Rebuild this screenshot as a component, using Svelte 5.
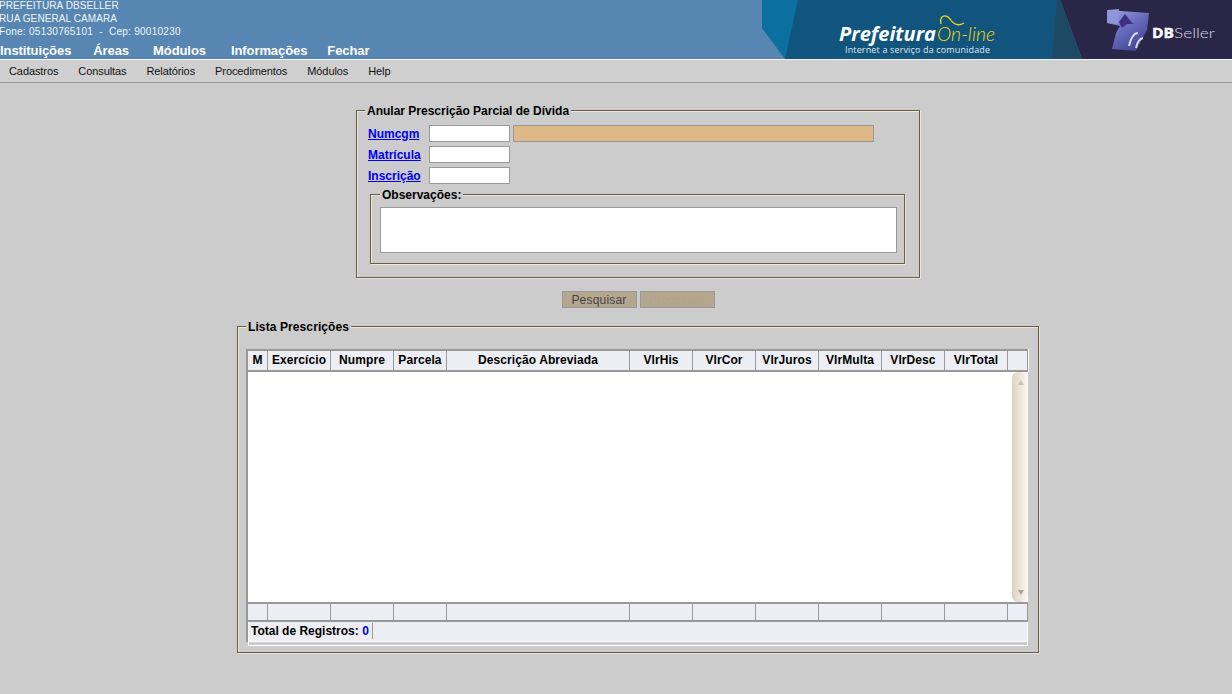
<script lang="ts">
	const mainMenu = ['Instituições', 'Áreas', 'Módulos', 'Informações', 'Fechar'];
	const subMenu = ['Cadastros', 'Consultas', 'Relatórios', 'Procedimentos', 'Módulos', 'Help'];
	const fields = ['Numcgm', 'Matrícula', 'Inscrição'];
	const columns = ['M', 'Exercício', 'Numpre', 'Parcela', 'Descrição Abreviada', 'VlrHis', 'VlrCor', 'VlrJuros', 'VlrMulta', 'VlrDesc', 'VlrTotal', ''];
</script>

<header class="topo">
	<div class="info">
		<div class="dados">
			<div>PREFEITURA DBSELLER</div>
			<div>RUA GENERAL CAMARA</div>
			<div class="fone">Fone: 05130765101 &nbsp;-&nbsp; Cep: 90010230</div>
		</div>
		<nav class="menu-principal">
			{#each mainMenu as item}
				<span>{item}</span>
			{/each}
		</nav>
	</div>
	<svg class="banner" width="470" height="59" viewBox="762 0 470 59" aria-label="Prefeitura On-line, DBSeller">
		<defs>
			<linearGradient id="cubo" x1="0" y1="0" x2="0.7" y2="1">
				<stop offset="0" stop-color="#a3a8e2" />
				<stop offset="0.5" stop-color="#6a6cc0" />
				<stop offset="1" stop-color="#43438f" />
			</linearGradient>
		</defs>
		<polygon points="1060,0 1232,0 1232,59 1082,59" fill="#2a2647" />
		<polygon points="762,0 800,0 786,59 785,59 762,28" fill="#0b6fa0" />
		<polygon points="798,0 1060,0 1082,59 785,59" fill="#11557f" />
		<polygon points="1057,0 1060,0 1082,59 1052,59" fill="#1d4965" />
		<text x="839" y="41" class="pref" textLength="97" lengthAdjust="spacingAndGlyphs">Prefeitura</text>
		<text x="937" y="41" class="online" textLength="58" lengthAdjust="spacingAndGlyphs">On-line</text>
		<path d="M941 24 C 939 15, 946 14, 950 19 C 954 25, 959 26, 964 23" fill="none" stroke="#f2d90c" stroke-width="1.3" />
		<text x="845" y="53" class="slogan" textLength="145">Internet a serviço da comunidade</text>
		<polygon points="1107,10 1149,13 1147,30 1136,51 1112,49 1116,33 1120,26 1107,23" fill="url(#cubo)" />
		<polygon points="1107,10 1119,9 1118,24 1107,23" fill="#8f95d8" />
		<polygon points="1119,22 1125,14 1133,24 1127,24 1122,28" fill="#3c2f7c" />
		<path d="M1129 46 Q1132 33 1138 33 M1136 48 Q1138 39 1143 38" fill="none" stroke="#d9dcf4" stroke-width="2" />
		<text x="1152" y="38" class="db" textLength="22" lengthAdjust="spacingAndGlyphs">DB</text>
		<text x="1174" y="38" class="seller" textLength="41" lengthAdjust="spacingAndGlyphs">Seller</text>
	</svg>
</header>

<nav class="menu-sec">
	{#each subMenu as item}
		<span>{item}</span>
	{/each}
</nav>

<main class="conteudo">
	<form class="form-anular">
		<fieldset class="caixa principal">
			<legend>Anular Prescrição Parcial de Dívida</legend>
			<div class="campos">
				{#each fields as field, i}
					<a href="#{field}" class="rotulo">{field}</a>
					<div class="linha">
						<input type="text" class="codigo" />
						{#if i === 0}<input type="text" class="nome" readonly />{/if}
					</div>
				{/each}
			</div>
			<fieldset class="caixa obs">
				<legend>Observações:</legend>
				<textarea></textarea>
			</fieldset>
		</fieldset>
		<div class="botoes">
			<button type="button">Pesquisar</button>
			<button type="button" class="apagado">Processar</button>
		</div>
	</form>

	<fieldset class="caixa lista">
		<legend>Lista Prescrições</legend>
		<div class="grade">
			<div class="linha-grade cabecalho">
				{#each columns as col}
					<div>{col}</div>
				{/each}
			</div>
			<div class="corpo">
				<div class="rolagem">
					<span class="seta cima"></span>
					<span class="seta baixo"></span>
				</div>
			</div>
			<div class="linha-grade rodape">
				{#each columns as _}
					<div></div>
				{/each}
			</div>
			<div class="pe">
				<div class="pe-branco">
					<div class="total">
						<span class="total-texto">Total de Registros: <b>0</b></span>
					</div>
				</div>
			</div>
		</div>
	</fieldset>
</main>

<style>
	:global(body) {
		background: #cccccc;
		font-family: 'Liberation Sans', Arial, sans-serif;
		min-height: 100vh;
	}

	.topo {
		display: flex;
		justify-content: space-between;
		height: 59px;
		background: #5786b3;
		overflow: hidden;
	}

	.dados {
		font-size: 10px;
		line-height: 13px;
		color: #f2f5f8;
		letter-spacing: 0.1px;
		white-space: nowrap;
		margin: -1px 0 0 -1px;
	}

	.fone {
		letter-spacing: 0.27px;
	}

	.menu-principal {
		display: flex;
		gap: 24px;
		margin-top: 6px;
		font-size: 13px;
		line-height: 14px;
		font-weight: bold;
		letter-spacing: -0.08px;
		color: #fff;
	}

	.menu-principal span:first-child {
		margin-right: -2px;
	}

	.menu-principal span:nth-child(3) {
		margin-right: 1px;
	}

	.menu-principal span:last-child {
		margin-left: -4px;
	}

	.banner {
		display: block;
		flex: none;
	}

	.pref {
		font: italic bold 19px 'Open Sans', sans-serif;
		fill: #fff;
	}

	.online {
		font: italic 300 19px 'Lato', sans-serif;
		fill: #f2d90c;
	}

	.slogan {
		font: 9px 'Open Sans', sans-serif;
		fill: #dfe8ee;
	}

	.db {
		font: bold 14px 'Open Sans', sans-serif;
		fill: #fff;
		stroke: #fff;
		stroke-width: 0.4;
	}

	.seller {
		font: 300 14px 'Lato', sans-serif;
		fill: #d8d8e4;
	}

	.menu-sec {
		display: flex;
		align-items: center;
		gap: 20px;
		height: 22px;
		padding-left: 9px;
		border-top: 1px solid #f4f4f4;
		border-bottom: 1px solid #9a9a9a;
		background: #cfcfcf;
		font-size: 11px;
		letter-spacing: -0.09px;
		color: #111;
	}

	.conteudo {
		display: flex;
		flex-direction: column;
		align-items: center;
		padding: 21px 0 0 44px;
	}

	.form-anular {
		display: flex;
		flex-direction: column;
		align-items: center;
	}

	.caixa {
		margin: 0;
		min-width: 0;
		border: 1px solid #635d4c;
		box-shadow:
			1px 1px 0 #ece7da,
			inset 1px 1px 0 #ece7da;
		box-sizing: border-box;
	}

	.caixa legend {
		padding: 1px 2px 0;
		background: #cccccc;
		font-size: 12px;
		line-height: 12px;
		font-weight: bold;
		color: #000;
	}

	.principal {
		width: 564px;
		height: 174px;
		padding: 0 13px 0 11px;
	}

	.principal > legend {
		margin-left: -3px;
	}

	.campos {
		display: grid;
		grid-template-columns: 61px 1fr;
		grid-auto-rows: 17px;
		row-gap: 4px;
		align-items: center;
		margin-top: 8px;
	}

	.rotulo {
		font-size: 12px;
		font-weight: bold;
		color: #0000ee;
	}

	.linha {
		display: flex;
		gap: 3px;
	}

	input,
	textarea {
		display: block;
		margin: 0;
		padding: 0;
		box-sizing: border-box;
		background: #fff;
		border: 1px solid #999;
		border-radius: 0;
		outline: none;
	}

	.codigo {
		width: 81px;
		height: 17px;
	}

	.nome {
		width: 361px;
		height: 17px;
		background: #deb887;
	}

	.obs {
		width: 535px;
		height: 76px;
		margin: 4px 0 0 2px;
		padding: 0 6px 0 9px;
	}

	textarea {
		width: 517px;
		height: 46px;
		margin-top: 6px;
		resize: none;
	}

	.botoes {
		display: flex;
		gap: 3px;
		margin: 13px 0 12px;
	}

	button {
		width: 75px;
		height: 17px;
		margin: 0;
		padding: 0;
		box-sizing: border-box;
		background: #b5a690;
		border: 1px solid #999;
		font-family: inherit;
		font-size: 12px;
		letter-spacing: 0.2px;
		color: #444;
	}

	.apagado {
		color: #b2a38e;
	}

	.lista {
		width: 802px;
		height: 333px;
		padding: 0 9px 0 8px;
	}

	.lista > legend {
		letter-spacing: 0.1px;
	}

	.grade {
		margin-top: 16px;
		width: 782px;
		font-size: 12px;
	}

	.linha-grade {
		display: grid;
		grid-template-columns: 20px 63px 63px 53px 183px 63px 63px 63px 63px 63px 63px 1fr;
		background: #eceef3;
		border: solid #999;
		border-width: 2px 1px 2px 2px;
		box-sizing: border-box;
	}

	.linha-grade > div {
		border-right: 1px solid #999;
		box-sizing: border-box;
		text-align: center;
		font-weight: bold;
		letter-spacing: 0.08px;
		color: #000;
		white-space: nowrap;
	}

	.linha-grade > div:last-child {
		border-right: none;
	}

	.cabecalho {
		height: 23px;
		line-height: 19px;
		box-shadow: 1px 0 0 #fff;
	}

	.corpo {
		display: flex;
		justify-content: flex-end;
		height: 230px;
		background: #fff;
		border-left: 2px solid #999;
	}

	.rolagem {
		position: relative;
		width: 16px;
		background: linear-gradient(90deg, #dcd2be, #ece6d9 50%, #fbf9f4);
		border-radius: 6px;
	}

	.seta {
		position: absolute;
		left: 6px;
		width: 0;
		height: 0;
		border-left: 3px solid transparent;
		border-right: 3px solid transparent;
	}

	.cima {
		top: 8px;
		border-bottom: 5px solid #c9c3b4;
	}

	.baixo {
		bottom: 7px;
		border-top: 5px solid #a9a497;
	}

	.rodape {
		height: 20px;
	}

	.pe {
		height: 20px;
		border-left: 2px solid #999;
	}

	.pe-branco {
		height: 24px;
		box-sizing: border-box;
		background: #cccccc;
		border: solid #fff;
		border-width: 0 1px 1px 1px;
	}

	.total {
		display: flex;
		align-items: center;
		height: 20px;
		box-sizing: border-box;
		padding: 0 0 1px 2px;
		background: #eceef3;
		border-bottom: 1px solid #fff;
		font-weight: bold;
		color: #000;
	}

	.total-texto {
		padding-right: 3px;
		border-right: 1px solid #999;
		line-height: 16px;
	}

	.total b {
		color: #0000ee;
	}
</style>
